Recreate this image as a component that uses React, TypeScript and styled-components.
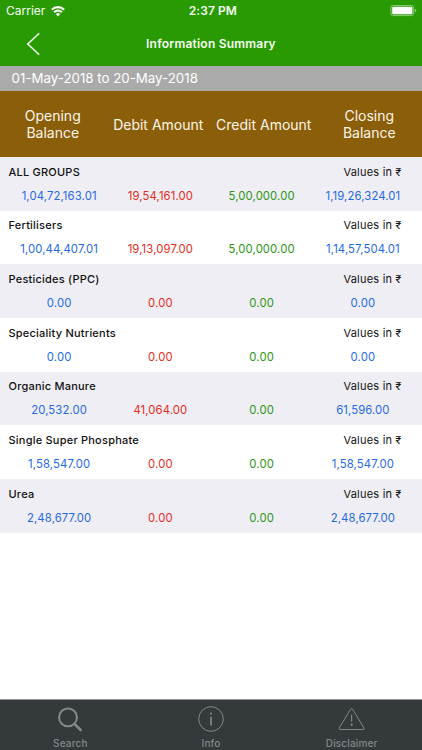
import React from "react";
import styled, { createGlobalStyle } from "styled-components";

const GlobalStyle = createGlobalStyle`
  * { box-sizing: border-box; }
  body { margin: 0; background: #fff; }
`;

const Screen = styled.div`
  display: flex;
  flex-direction: column;
  width: 100%;
  height: 750px;
  overflow: hidden;
  background: #fff;
  font-family: Inter, "Noto Sans", sans-serif;
  font-size: 12px;
`;

const TopArea = styled.header`
  height: 65.5px;
  flex: none;
  background: #299a02;
  color: #f7fdf2;
`;

const StatusBar = styled.div`
  display: grid;
  grid-template-columns: 1fr auto 1fr;
  align-items: center;
  height: 22px;
  padding: 0 5.3px 0 6px;
`;

const Carrier = styled.div`
  display: flex;
  align-items: center;
  gap: 6px;
  line-height: 14px;
`;

const Clock = styled.div`
  font-weight: 600;
  line-height: 14px;
  letter-spacing: 0.1px;
  padding: 0 0 1px 3px;
`;

const BatterySlot = styled.div`
  display: flex;
  justify-content: flex-end;
`;

const NavBar = styled.div`
  display: grid;
  grid-template-columns: 60px 1fr 60px;
  align-items: center;
  height: 43px;
`;

const BackButton = styled.button`
  display: flex;
  padding: 0 0 0 26px;
  border: 0;
  background: none;
  color: inherit;
`;

const Title = styled.h1`
  margin: 0;
  font-size: 12px;
  font-weight: 600;
  letter-spacing: 0.22px;
  text-align: center;
`;

const DateRange = styled.div`
  flex: none;
  height: 25.5px;
  padding-left: 11.6px;
  background: #aaa;
  color: #fff;
  font-size: 13.3px;
  line-height: 25.5px;
`;

const ColumnHeads = styled.div`
  display: grid;
  grid-template-columns: repeat(4, 1fr);
  align-items: center;
  flex: none;
  height: 66px;
  background: #8b5e0a;
  color: #fcf5e8;
  font-size: 14px;
  line-height: 17px;
  text-align: center;
`;

const ColumnHead = styled.div`
  white-space: pre;
`;

const Groups = styled.main`
  flex: 1;
`;

const Group = styled.section`
  height: 53.67px;
  padding: 5.6px 8.5px 0;
  color: #111;
  &:nth-child(odd) {
    background: #efeef4;
  }
`;

const GroupTop = styled.div`
  display: flex;
  justify-content: space-between;
  height: 18px;
  padding-right: 12px;
  font-size: 11px;
  line-height: 18px;
  letter-spacing: 0.22px;
`;

const GroupName = styled.div`
  font-weight: 500;
`;

const Rupee = styled.span`
  font-family: Roboto, "Noto Sans", sans-serif;
  font-size: 11px;
`;

const Amounts = styled.div`
  display: grid;
  grid-template-columns: repeat(4, 1fr);
  padding-top: 6px;
  font-size: 11.3px;
  line-height: 18px;
  letter-spacing: 0.12px;
  text-align: center;
`;

const tones = { blue: "#1f69e6", red: "#e52b20", green: "#2b9412" };

const Amount = styled.div<{ $tone: keyof typeof tones }>`
  color: ${({ $tone }) => tones[$tone]};
`;

const TabBar = styled.nav`
  display: grid;
  grid-template-columns: repeat(3, 1fr);
  flex: none;
  height: 51px;
  border-top: 1px solid #8d9193;
  background: #34393c;
  color: #858788;
`;

const Tab = styled.div`
  display: flex;
  flex-direction: column;
  align-items: center;
  padding-top: 4.5px;
  font-size: 10px;
  font-weight: 500;
  line-height: 12px;
  letter-spacing: 0.15px;
  svg {
    margin-bottom: 4px;
  }
`;

const WifiIcon = () => (
  <svg width="14" height="11" viewBox="0 0 14 11" fill="none" stroke="currentColor" strokeWidth="2.1">
    <path d="M.8 3.7a8.8 8.8 0 0 1 12.4 0" />
    <path d="M3.1 6.2a5.6 5.6 0 0 1 7.8 0" />
    <path d="M7 10.4 4.8 8.1a3.1 3.1 0 0 1 4.4 0z" fill="currentColor" stroke="none" />
  </svg>
);

const BatteryIcon = () => (
  <svg width="27" height="12" viewBox="0 0 27 12">
    <rect x=".9" y=".4" width="22.8" height="10.2" rx="2.4" fill="none" stroke="#8fcd7a" />
    <rect x="2.2" y="1.7" width="20.2" height="7.6" rx="1" fill="#fff" />
    <path d="M24.8 3.8q1.5.5 1.5 1.7t-1.5 1.7z" fill="#8fcd7a" />
  </svg>
);

const BackIcon = () => (
  <svg width="15" height="24" viewBox="0 0 15 24" fill="none" stroke="currentColor" strokeWidth="1.5">
    <path d="M13.2 1.2 1.8 12l11.4 10.8" />
  </svg>
);

const SearchIcon = () => (
  <svg width="28" height="28" viewBox="0 0 28 28" fill="none" stroke="currentColor">
    <circle cx="12" cy="12.4" r="8.9" strokeWidth="2.1" />
    <path d="m18.5 18.9 6.1 6.1" strokeWidth="2.7" strokeLinecap="round" />
  </svg>
);

const InfoIcon = () => (
  <svg width="28" height="28" viewBox="0 0 28 28" fill="none" stroke="currentColor">
    <circle cx="14" cy="14" r="12.3" />
    <path d="M14 11.7v8.8" strokeWidth="1.7" />
    <circle cx="14" cy="8.6" r="1.1" fill="currentColor" stroke="none" />
  </svg>
);

const WarningIcon = () => (
  <svg width="28" height="28" viewBox="0 0 28 28" fill="none" stroke="currentColor">
    <path d="M12.7 4.1q.9-1.3 1.8 0l11.4 18.7q.7 1.6-1 1.7H2.3q-1.7-.1-1-1.7z" />
    <path d="M13.6 9.8v6.8" strokeWidth="1.2" />
    <circle cx="13.6" cy="19.7" r="1.1" fill="currentColor" stroke="none" />
  </svg>
);

const groups: [string, string, string, string, string][] = [
  ["ALL GROUPS", "1,04,72,163.01", "19,54,161.00", "5,00,000.00", "1,19,26,324.01"],
  ["Fertilisers", "1,00,44,407.01", "19,13,097.00", "5,00,000.00", "1,14,57,504.01"],
  ["Pesticides (PPC)", "0.00", "0.00", "0.00", "0.00"],
  ["Speciality Nutrients", "0.00", "0.00", "0.00", "0.00"],
  ["Organic Manure", "20,532.00", "41,064.00", "0.00", "61,596.00"],
  ["Single Super Phosphate", "1,58,547.00", "0.00", "0.00", "1,58,547.00"],
  ["Urea", "2,48,677.00", "0.00", "0.00", "2,48,677.00"],
];

export default function App() {
  return (
    <Screen>
      <GlobalStyle />
      <TopArea>
        <StatusBar>
          <Carrier>
            Carrier <WifiIcon />
          </Carrier>
          <Clock>2:37 PM</Clock>
          <BatterySlot>
            <BatteryIcon />
          </BatterySlot>
        </StatusBar>
        <NavBar>
          <BackButton aria-label="Back">
            <BackIcon />
          </BackButton>
          <Title>Information Summary</Title>
        </NavBar>
      </TopArea>
      <DateRange>01-May-2018 to 20-May-2018</DateRange>
      <ColumnHeads>
        <ColumnHead>{"Opening\nBalance"}</ColumnHead>
        <ColumnHead>Debit Amount</ColumnHead>
        <ColumnHead>Credit Amount</ColumnHead>
        <ColumnHead>{"Closing\nBalance"}</ColumnHead>
      </ColumnHeads>
      <Groups>
        {groups.map(([name, opening, debit, credit, closing]) => (
          <Group key={name}>
            <GroupTop>
              <GroupName>{name}</GroupName>
              <div>
                Values in <Rupee>₹</Rupee>
              </div>
            </GroupTop>
            <Amounts>
              <Amount $tone="blue">{opening}</Amount>
              <Amount $tone="red">{debit}</Amount>
              <Amount $tone="green">{credit}</Amount>
              <Amount $tone="blue">{closing}</Amount>
            </Amounts>
          </Group>
        ))}
      </Groups>
      <TabBar>
        <Tab>
          <SearchIcon />
          Search
        </Tab>
        <Tab>
          <InfoIcon />
          Info
        </Tab>
        <Tab>
          <WarningIcon />
          Disclaimer
        </Tab>
      </TabBar>
    </Screen>
  );
}
